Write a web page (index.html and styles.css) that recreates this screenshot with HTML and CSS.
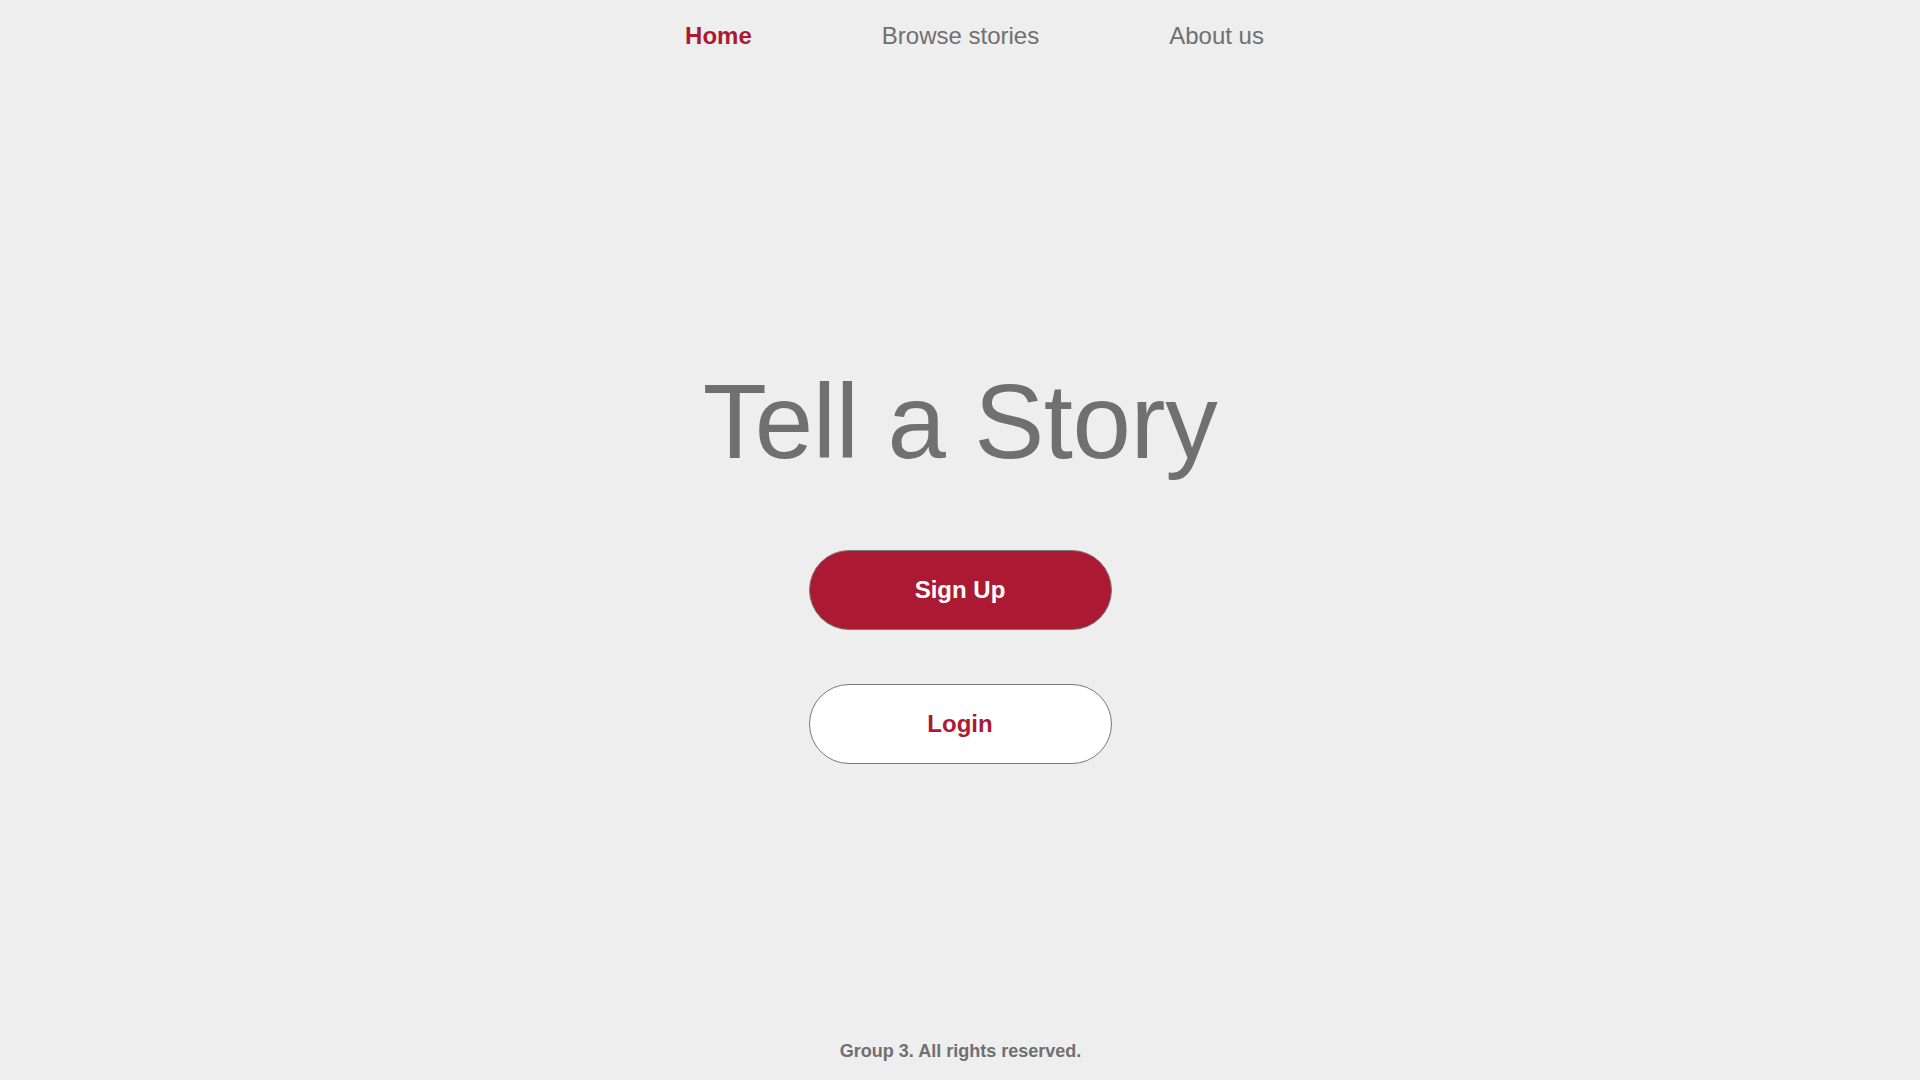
FILE: index.html
```html
<!DOCTYPE html>
<html lang="en">
<head>
<meta charset="utf-8">
<title>Tell a Story</title>
<link rel="stylesheet" href="styles.css">
</head>
<body>
<header class="site-header">
  <nav class="main-nav">
    <a class="nav-link active" href="#">Home</a>
    <a class="nav-link" href="#">Browse stories</a>
    <a class="nav-link" href="#">About us</a>
  </nav>
</header>
<main class="hero">
  <h1 class="hero-title">Tell a Story</h1>
  <div class="hero-actions">
    <a class="btn btn-primary" href="#">Sign Up</a>
    <a class="btn btn-secondary" href="#">Login</a>
  </div>
</main>
<footer class="site-footer">Group 3. All rights reserved.</footer>
</body>
</html>
```
FILE: styles.css
```css
* { box-sizing: border-box; }
html, body { height: 100%; }
body {
  margin: 0;
  background: #eeeeee;
  font-family: "Liberation Sans", Arial, Helvetica, sans-serif;
  color: #707070;
  display: flex;
  flex-direction: column;
  min-height: 100vh;
}
.site-header { padding-top: 22px; }
.main-nav {
  display: flex;
  justify-content: center;
  gap: 130px;
  padding-left: 29px;
}
.nav-link {
  font-size: 24px;
  line-height: 28px;
  color: #707070;
  text-decoration: none;
}
.nav-link.active { color: #ab1a32; font-weight: 700; }
.hero {
  flex: 1;
  display: flex;
  flex-direction: column;
  align-items: center;
  padding-top: 319px;
}
.hero-title {
  margin: 0;
  font-size: 105px;
  line-height: 105px;
  font-weight: 400;
  color: #707070;
  letter-spacing: -0.4px;
}
.hero-actions {
  margin-top: 76px;
  display: flex;
  flex-direction: column;
  align-items: center;
  gap: 54px;
}
.btn {
  width: 303px;
  height: 80px;
  border-radius: 40px;
  border: 1px solid #7a7a7a;
  display: flex;
  align-items: center;
  justify-content: center;
  font-size: 24px;
  font-weight: 700;
  text-decoration: none;
}
.btn-primary { background: #ab1a32; color: #ffffff; }
.btn-secondary { background: #ffffff; color: #ab1a32; }
.site-footer {
  text-align: center;
  font-size: 18px;
  line-height: 21px;
  font-weight: 700;
  color: #707070;
  padding-bottom: 18px;
  padding-left: 1px;
}
```
